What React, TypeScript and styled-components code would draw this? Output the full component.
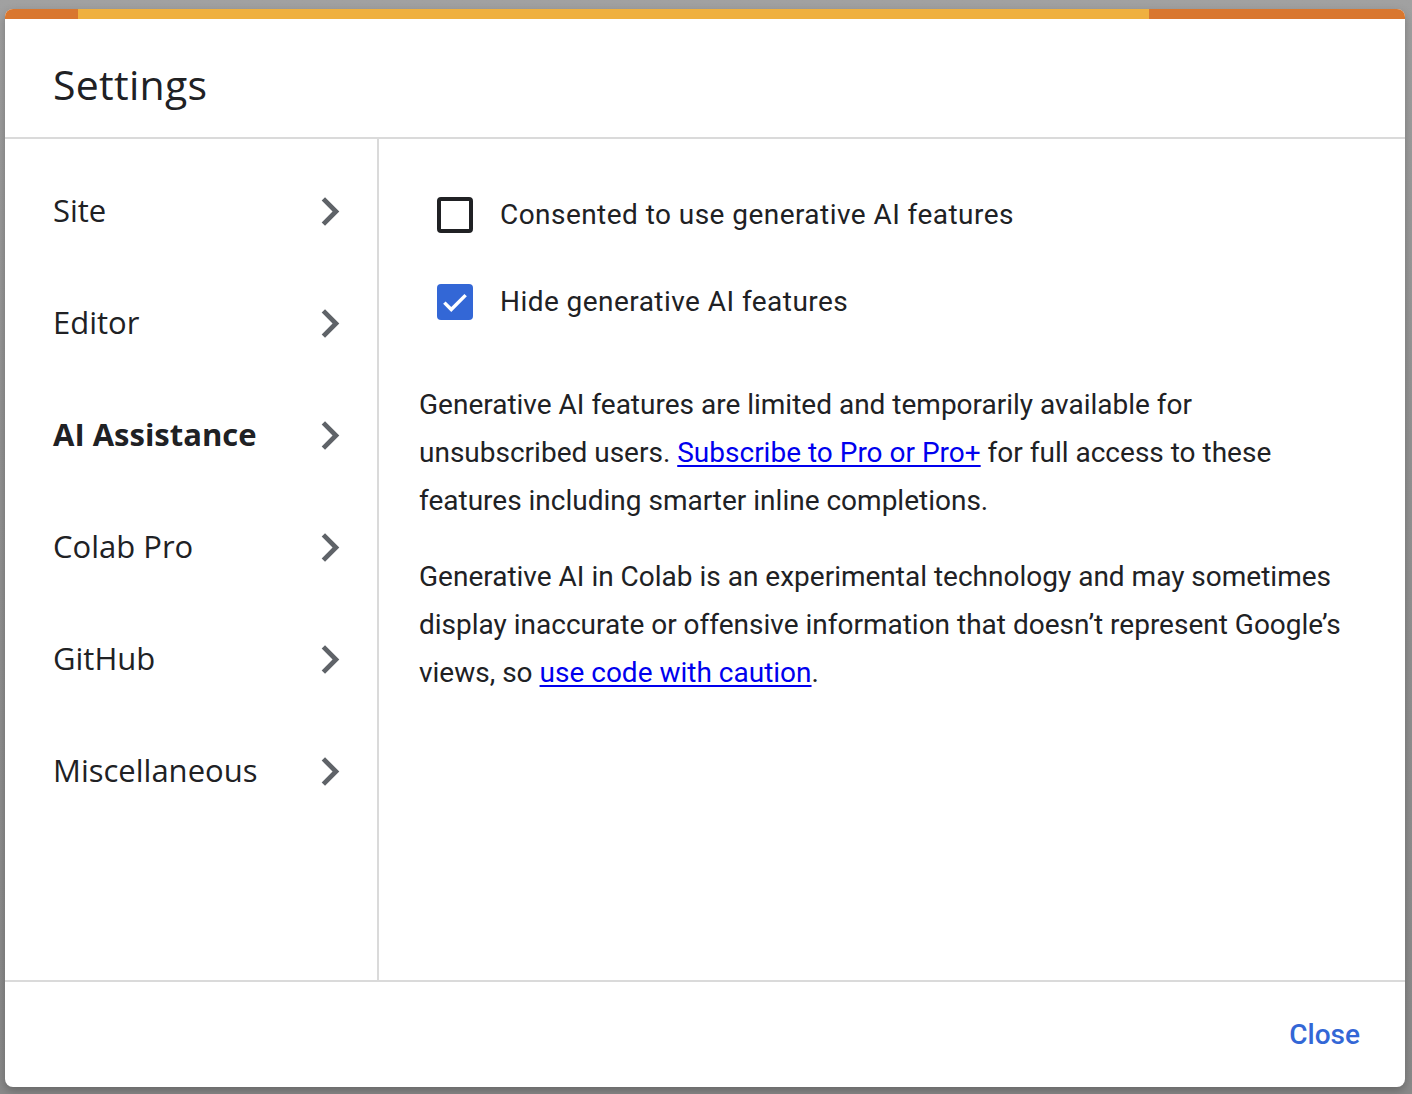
import React from "react";
import styled, { createGlobalStyle } from "styled-components";

const Global = createGlobalStyle`
  html, body { margin: 0; padding: 0; }
  body {
    width: 1412px;
    height: 1094px;
    overflow: hidden;
    background: linear-gradient(180deg, #a1a1a1 0%, #939393 40%, #8a8a8a 100%);
    font-family: Roboto, "Liberation Sans", sans-serif;
  }
`;

const Overlay = styled.div`
  box-sizing: border-box;
  width: 1412px;
  height: 1094px;
  padding: 9px 7px 7px 5px;
  display: flex;
  align-items: flex-start;
`;

const Dialog = styled.div`
  width: 1400px;
  height: 1078px;
  background: #ffffff;
  border-radius: 8px;
  overflow: hidden;
  display: flex;
  flex-direction: column;
  box-shadow: 0 4px 10px rgba(0, 0, 0, 0.25);
`;

const TopBar = styled.div`
  height: 10px;
  display: flex;
  flex-shrink: 0;
`;

const BarSegment = styled.div<{ $color: string; $w?: number }>`
  background: ${(p) => p.$color};
  ${(p) => (p.$w ? `width: ${p.$w}px;` : "flex: 1;")}
`;

const Header = styled.div`
  height: 120px;
  flex-shrink: 0;
  box-sizing: border-box;
  border-bottom: 2px solid #dadada;
  padding: 0 0 0 48px;
  display: flex;
  align-items: center;
`;

const Title = styled.h2`
  margin: 0;
  padding-top: 12px;
  font-family: "Open Sans", Roboto, sans-serif;
  font-weight: 500;
  font-size: 41px;
  color: #202124;
  letter-spacing: 0.3px;
`;

const Body = styled.div`
  flex: 1;
  display: flex;
  min-height: 0;
`;

const Nav = styled.nav`
  width: 374px;
  box-sizing: border-box;
  border-right: 2px solid #dadada;
  padding-top: 15px;
  display: flex;
  flex-direction: column;
`;

const NavItem = styled.div<{ $active?: boolean }>`
  height: 112px;
  display: flex;
  align-items: center;
  justify-content: space-between;
  padding: 0 37px 0 48px;
  font-family: "Open Sans", Roboto, sans-serif;
  font-size: 31px;
  font-weight: ${(p) => (p.$active ? 700 : 400)};
  color: #202124;
`;

const Chevron = styled.svg`
  width: 19px;
  height: 29px;
  fill: #5f6368;
  margin-top: 2px;
`;

const Content = styled.div`
  flex: 1;
  padding: 32px 45px 0 40px;
  display: flex;
  flex-direction: column;
`;

const CheckRow = styled.label`
  height: 87px;
  display: flex;
  align-items: center;
  padding-left: 18px;
  gap: 27px;
  font-size: 28px;
  letter-spacing: 0.45px;
  color: #202124;
`;

const Box = styled.span<{ $checked?: boolean }>`
  box-sizing: border-box;
  width: 36px;
  height: 36px;
  border-radius: 4px;
  border: ${(p) => (p.$checked ? "none" : "4px solid #202124")};
  background: ${(p) => (p.$checked ? "#3367d6" : "transparent")};
  display: flex;
  align-items: center;
  justify-content: center;
  flex-shrink: 0;
`;

const Para = styled.p<{ $top: number }>`
  margin: ${(p) => p.$top}px 0 0 0;
  font-size: 28px;
  line-height: 48px;
  color: #202124;
`;

const Link = styled.a`
  color: #0000ee;
  text-decoration: underline;
  text-underline-offset: 3px;
`;

const Footer = styled.div`
  height: 107px;
  flex-shrink: 0;
  box-sizing: border-box;
  border-top: 2px solid #dadada;
  display: flex;
  align-items: center;
  justify-content: flex-end;
  padding: 0 45px 0 0;
`;

const CloseButton = styled.button`
  background: none;
  border: none;
  padding: 0;
  font-family: Roboto, sans-serif;
  font-size: 28px;
  font-weight: 500;
  color: #3367d6;
  cursor: pointer;
`;

const navItems = ["Site", "Editor", "AI Assistance", "Colab Pro", "GitHub", "Miscellaneous"];

export default function App() {
  return (
    <>
      <Global />
      <Overlay>
        <Dialog>
          <TopBar>
            <BarSegment $color="#d9772f" $w={73} />
            <BarSegment $color="#efb03f" />
            <BarSegment $color="#d9772f" $w={256} />
          </TopBar>
          <Header>
            <Title>Settings</Title>
          </Header>
          <Body>
            <Nav>
              {navItems.map((n) => (
                <NavItem key={n} $active={n === "AI Assistance"}>
                  <span>{n}</span>
                  <Chevron viewBox="8.3 6 8 12">
                    <path d="M10 6L8.59 7.41 13.17 12l-4.58 4.59L10 18l6-6z" />
                  </Chevron>
                </NavItem>
              ))}
            </Nav>
            <Content>
              <CheckRow>
                <Box />
                Consented to use generative AI features
              </CheckRow>
              <CheckRow>
                <Box $checked>
                  <svg width="30" height="30" viewBox="0 0 24 24">
                    <path d="M3.5 12.5l5.5 5.5L20.5 6.5" fill="none" stroke="#fff" strokeWidth="2.8" />
                  </svg>
                </Box>
                Hide generative AI features
              </CheckRow>
              <Para $top={36}>
                Generative AI features are limited and temporarily available for unsubscribed users.{" "}
                <Link href="#">Subscribe to Pro or Pro+</Link> for full access to these features including smarter
                inline completions.
              </Para>
              <Para $top={28}>
                Generative AI in Colab is an experimental technology and may sometimes display inaccurate or
                offensive information that doesn’t represent Google’s views, so{" "}
                <Link href="#">use code with caution</Link>.
              </Para>
            </Content>
          </Body>
          <Footer>
            <CloseButton>Close</CloseButton>
          </Footer>
        </Dialog>
      </Overlay>
    </>
  );
}
